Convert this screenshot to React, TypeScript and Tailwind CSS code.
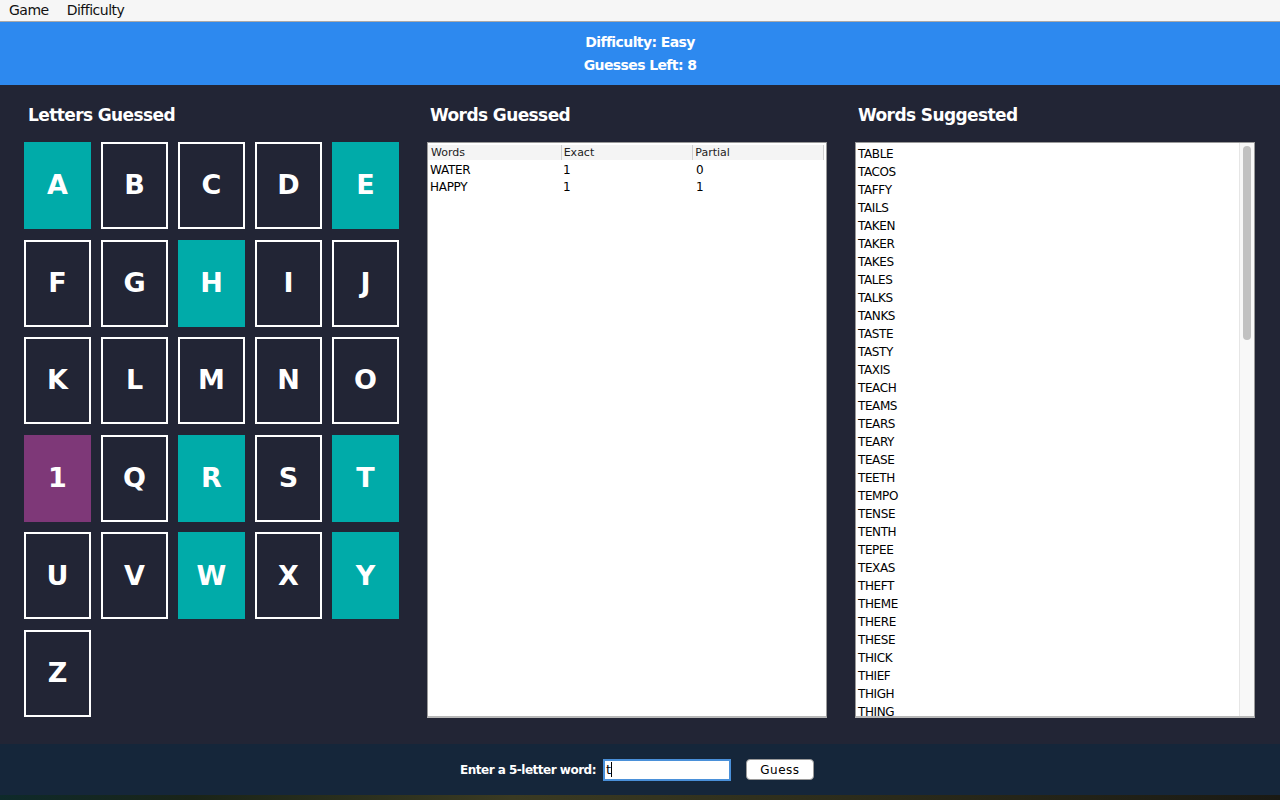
import React from "react";

type Tile = { l: string; kind: "teal" | "purple" | "empty" };

const tiles: Tile[] = [
  { l: "A", kind: "teal" },
  { l: "B", kind: "empty" },
  { l: "C", kind: "empty" },
  { l: "D", kind: "empty" },
  { l: "E", kind: "teal" },
  { l: "F", kind: "empty" },
  { l: "G", kind: "empty" },
  { l: "H", kind: "teal" },
  { l: "I", kind: "empty" },
  { l: "J", kind: "empty" },
  { l: "K", kind: "empty" },
  { l: "L", kind: "empty" },
  { l: "M", kind: "empty" },
  { l: "N", kind: "empty" },
  { l: "O", kind: "empty" },
  { l: "1", kind: "purple" },
  { l: "Q", kind: "empty" },
  { l: "R", kind: "teal" },
  { l: "S", kind: "empty" },
  { l: "T", kind: "teal" },
  { l: "U", kind: "empty" },
  { l: "V", kind: "empty" },
  { l: "W", kind: "teal" },
  { l: "X", kind: "empty" },
  { l: "Y", kind: "teal" },
  { l: "Z", kind: "empty" },
];

const words = [
  "TABLE", "TACOS", "TAFFY", "TAILS", "TAKEN", "TAKER", "TAKES", "TALES", "TALKS", "TANKS",
  "TASTE", "TASTY", "TAXIS", "TEACH", "TEAMS", "TEARS", "TEARY", "TEASE", "TEETH", "TEMPO",
  "TENSE", "TENTH", "TEPEE", "TEXAS", "THEFT", "THEME", "THERE", "THESE", "THICK", "THIEF",
  "THIGH", "THING",
];

const sans = { fontFamily: '"DejaVu Sans", "Open Sans", sans-serif' };

export default function App() {
  return (
    <div className="w-[1280px] h-[800px] overflow-hidden flex flex-col bg-[#222535]" style={sans}>
      {/* Menu bar */}
      <div className="h-[22px] shrink-0 bg-[#f6f6f6] border-b border-[#a8a8a8] flex items-center text-[14px] text-[#111] tracking-[-0.5px]">
        <span className="ml-[9px]">Game</span>
        <span className="ml-[18px]">Difficulty</span>
      </div>

      {/* Header */}
      <div className="h-[63px] shrink-0 bg-[#2d89ef] flex flex-col items-center justify-center text-white font-bold text-[14px] leading-[23px] tracking-[-0.6px]">
        <div>Difficulty: Easy</div>
        <div>Guesses Left: 8</div>
      </div>

      {/* Main */}
      <div className="h-[659px] shrink-0 flex pl-[24px] pt-[18px] gap-[28px]">
        {/* Letters */}
        <div className="w-[375px] flex flex-col">
          <div className="h-[39px] pl-[4px] text-white font-bold text-[17px] tracking-[-0.6px] leading-[24px]">Letters Guessed</div>
          <div className="grid grid-cols-[repeat(5,67px)] auto-rows-[87px] gap-x-[10px] gap-y-[10.6px]">
            {tiles.map((t) => (
              <div
                key={t.l}
                className={
                  t.kind === "teal"
                    ? "bg-[#00aba9] flex items-center justify-center text-white text-[27px] font-bold"
                    : t.kind === "purple"
                    ? "bg-[#7e3878] flex items-center justify-center text-white text-[27px] font-bold"
                    : "border-2 border-white bg-[#222535] flex items-center justify-center text-white text-[27px] font-bold"
                }
              >
                {t.l}
              </div>
            ))}
          </div>
        </div>

        {/* Words guessed */}
        <div className="w-[400px] flex flex-col">
          <div className="h-[39px] pl-[3px] text-white font-bold text-[17px] tracking-[-0.6px] leading-[24px]">Words Guessed</div>
          <div className="h-[576px] bg-white border border-[#9a9a9a] border-b-2 border-b-[#b8b8b8] pt-[2px] text-[12px] text-black">
            <div className="flex h-[15px] bg-[#f4f4f4] text-[11px] text-[#222] leading-[15px] mr-[2px] mb-[2px]">
              <div className="w-[134px] pl-[3px] border-r border-[#d0d0d0]">Words</div>
              <div className="w-[132px] pl-[2px] border-r border-[#d0d0d0]">Exact</div>
              <div className="w-[131px] pl-[2px] border-r border-[#d0d0d0]">Partial</div>
            </div>
            {[
              ["WATER", "1", "0"],
              ["HAPPY", "1", "1"],
            ].map((r) => (
              <div key={r[0]} className="flex h-[17px] leading-[17px] tracking-[-0.3px]">
                <div className="w-[134px] pl-[2px]">{r[0]}</div>
                <div className="w-[133px] pl-[1px]">{r[1]}</div>
                <div className="w-[131px] pl-[1px]">{r[2]}</div>
              </div>
            ))}
          </div>
        </div>

        {/* Words suggested */}
        <div className="w-[400px] flex flex-col">
          <div className="h-[39px] pl-[3px] text-white font-bold text-[17px] tracking-[-0.6px] leading-[24px]">Words Suggested</div>
          <div className="h-[576px] bg-white border border-[#9a9a9a] border-b-2 border-b-[#b8b8b8] flex overflow-hidden">
            <div className="flex-1 pt-[2px] text-[12px] text-black leading-[18px] tracking-[-0.4px] pl-[2px] overflow-hidden">
              {words.map((w) => (
                <div key={w}>{w}</div>
              ))}
            </div>
            <div className="w-[15px] bg-[#f8f8f8] border-l border-[#e6e6e6] pt-[3px] px-[3px]">
              <div className="h-[194px] rounded-full bg-[#c1c1c1]" />
            </div>
          </div>
        </div>
      </div>

      {/* Bottom bar */}
      <div className="h-[51px] shrink-0 bg-[#15263a] flex items-center justify-center pr-[6px]">
        <span className="text-white font-bold text-[12px] tracking-[-0.5px] mr-[7px]">Enter a 5-letter word:</span>
        <div className="w-[128px] h-[22px] bg-white border-2 border-[#4a90d9] flex items-center pl-[1px] text-[13px] text-black">
          <span>t</span>
          <span className="w-px h-[15px] bg-black" />
        </div>
        <button className="ml-[15px] w-[68px] h-[21px] bg-white rounded-[4px] border border-[#9a9a9a] text-[12px] text-black tracking-[0.5px] leading-none">
          Guess
        </button>
      </div>
      <div className="flex-1 bg-[linear-gradient(90deg,#0e2a2a_0%,#1a2418_15%,#3a3a22_40%,#2a2a1a_70%,#1a1a14_100%)]" />
    </div>
  );
}
